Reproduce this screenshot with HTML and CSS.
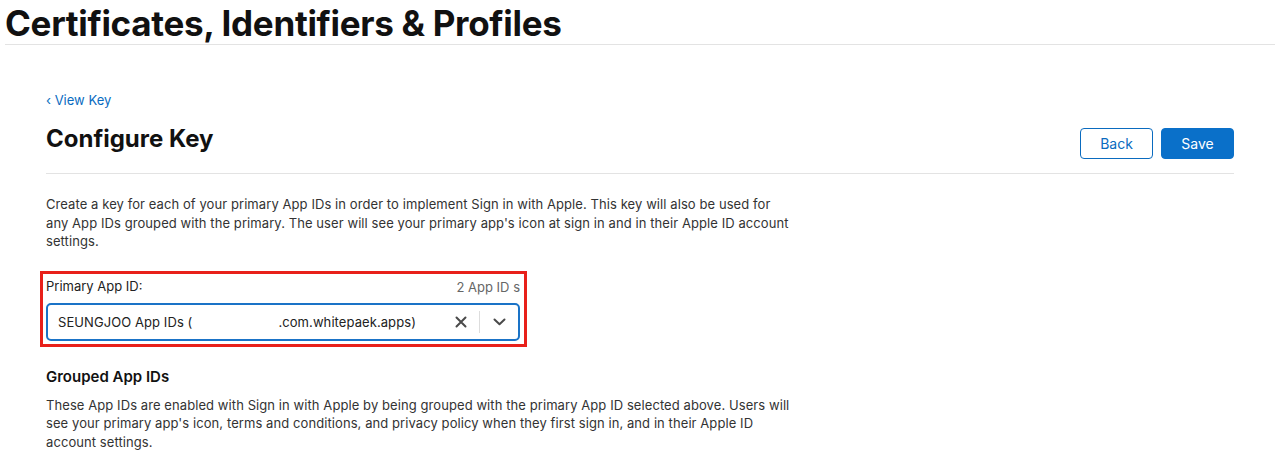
FILE: index.html
```html
<!DOCTYPE html>
<html lang="en">
<head>
    <meta charset="UTF-8">
    <title>Certificates, Identifiers &amp; Profiles</title>
    <link rel="stylesheet" href="styles.css">
</head>
<body>

<header class="page-header">
    <h1>Certificates, Identifiers &amp; Profiles</h1>
</header>

<main class="content">
    <a class="back-link" href="#">&lsaquo; View Key</a>

    <div class="title-row">
        <h2>Configure Key</h2>
        <div class="actions">
            <button class="btn btn-outline">Back</button>
            <button class="btn btn-primary">Save</button>
        </div>
    </div>

    <p class="intro">Create a key for each of your primary App IDs in order to implement Sign in with Apple. This key will also be used for any App IDs grouped with the primary. The user will see your primary app's icon at sign in and in their Apple ID account settings.</p>

    <div class="highlight">
        <div class="field-head">
            <label>Primary App ID:</label>
            <span class="count">2 App ID s</span>
        </div>
        <div class="select">
            <span class="select-value">SEUNGJOO App IDs (<span class="blank"></span>.com.whitepaek.apps)</span>
            <span class="clear">
                <svg width="12" height="12" viewBox="0 0 12 12"><path d="M1.5 1.5 L10.5 10.5 M10.5 1.5 L1.5 10.5" stroke="#4a4a4a" stroke-width="2" stroke-linecap="round"/></svg>
            </span>
            <span class="sep"></span>
            <span class="arrow">
                <svg width="13" height="8" viewBox="0 0 13 8"><path d="M1.5 1.5 L6.5 6.2 L11.5 1.5" fill="none" stroke="#4a4a4a" stroke-width="2" stroke-linecap="round" stroke-linejoin="round"/></svg>
            </span>
        </div>
    </div>

    <h3>Grouped App IDs</h3>
    <p class="intro">These App IDs are enabled with Sign in with Apple by being grouped with the primary App ID selected above. Users will see your primary app's icon, terms and conditions, and privacy policy when they first sign in, and in their Apple ID account settings.</p>
</main>

</body>
</html>
```

FILE: styles.css
```css
body {
    margin: 0;
    font-family: Inter, "Liberation Sans", sans-serif;
    color: #1d1d1f;
    background: #fff;
}
.page-header {
    margin: 0 5px;
    border-bottom: 1px solid #e3e3e3;
}
.page-header h1 {
    margin: 0;
    padding: 3px 0 0;
    font-size: 35px;
    font-weight: 700;
    line-height: 41px;
    letter-spacing: -0.3px;
    color: #111;
}
.content {
    margin: 0 46px;
    padding-top: 46px;
}
.back-link {
    display: block;
    font-size: 13px;
    line-height: 18px;
    color: #0a6bbf;
    text-decoration: none;
}
.title-row {
    display: flex;
    justify-content: space-between;
    align-items: flex-start;
    padding: 0 0 14px;
    border-bottom: 1px solid #e3e3e3;
}
.title-row h2 {
    margin: 15px 0 0;
    font-size: 24px;
    font-weight: 700;
    line-height: 30px;
    color: #111;
}
.actions {
    display: flex;
    gap: 8px;
    padding-top: 19px;
}
.btn {
    width: 73px;
    height: 31px;
    font-family: inherit;
    font-size: 14px;
    border-radius: 4px;
    cursor: pointer;
}
.btn-outline {
    background: #fff;
    color: #0a6bbf;
    border: 1px solid #0a6bbf;
}
.btn-primary {
    background: #0a70c9;
    color: #fff;
    border: 1px solid #0a70c9;
}
.intro {
    max-width: 745px;
    margin: 21px 0 0;
    font-size: 13px;
    line-height: 18.5px;
    letter-spacing: 0.08px;
    color: #333;
}
.highlight {
    width: 474px;
    margin: 20px 0 0 -6px;
    padding: 3px 4px 3px 3px;
    border: 3px solid #e8201a;
}
.field-head {
    display: flex;
    justify-content: space-between;
    font-size: 13px;
    line-height: 18px;
    margin-bottom: 7px;
}
.field-head label {
    color: #222;
}
.count {
    color: #666;
    padding-top: 1px;
}
.select {
    display: flex;
    align-items: center;
    height: 34px;
    border: 2px solid #1a73c7;
    border-radius: 5px;
    padding: 0 10px;
    font-size: 13px;
    letter-spacing: 0.08px;
}
.select-value {
    flex: 1;
    color: #222;
    white-space: nowrap;
}
.blank {
    display: inline-block;
    width: 86px;
}
.clear {
    display: flex;
    padding: 0 12px 0 0;
}
.sep {
    width: 1px;
    height: 22px;
    background: #ddd;
}
.arrow {
    display: flex;
    padding: 0 2px 0 13px;
}
h3 {
    margin: 20px 0 0;
    font-size: 15px;
    font-weight: 600;
    line-height: 20px;
    color: #111;
}
h3 + .intro {
    margin-top: 9px;
}
```
